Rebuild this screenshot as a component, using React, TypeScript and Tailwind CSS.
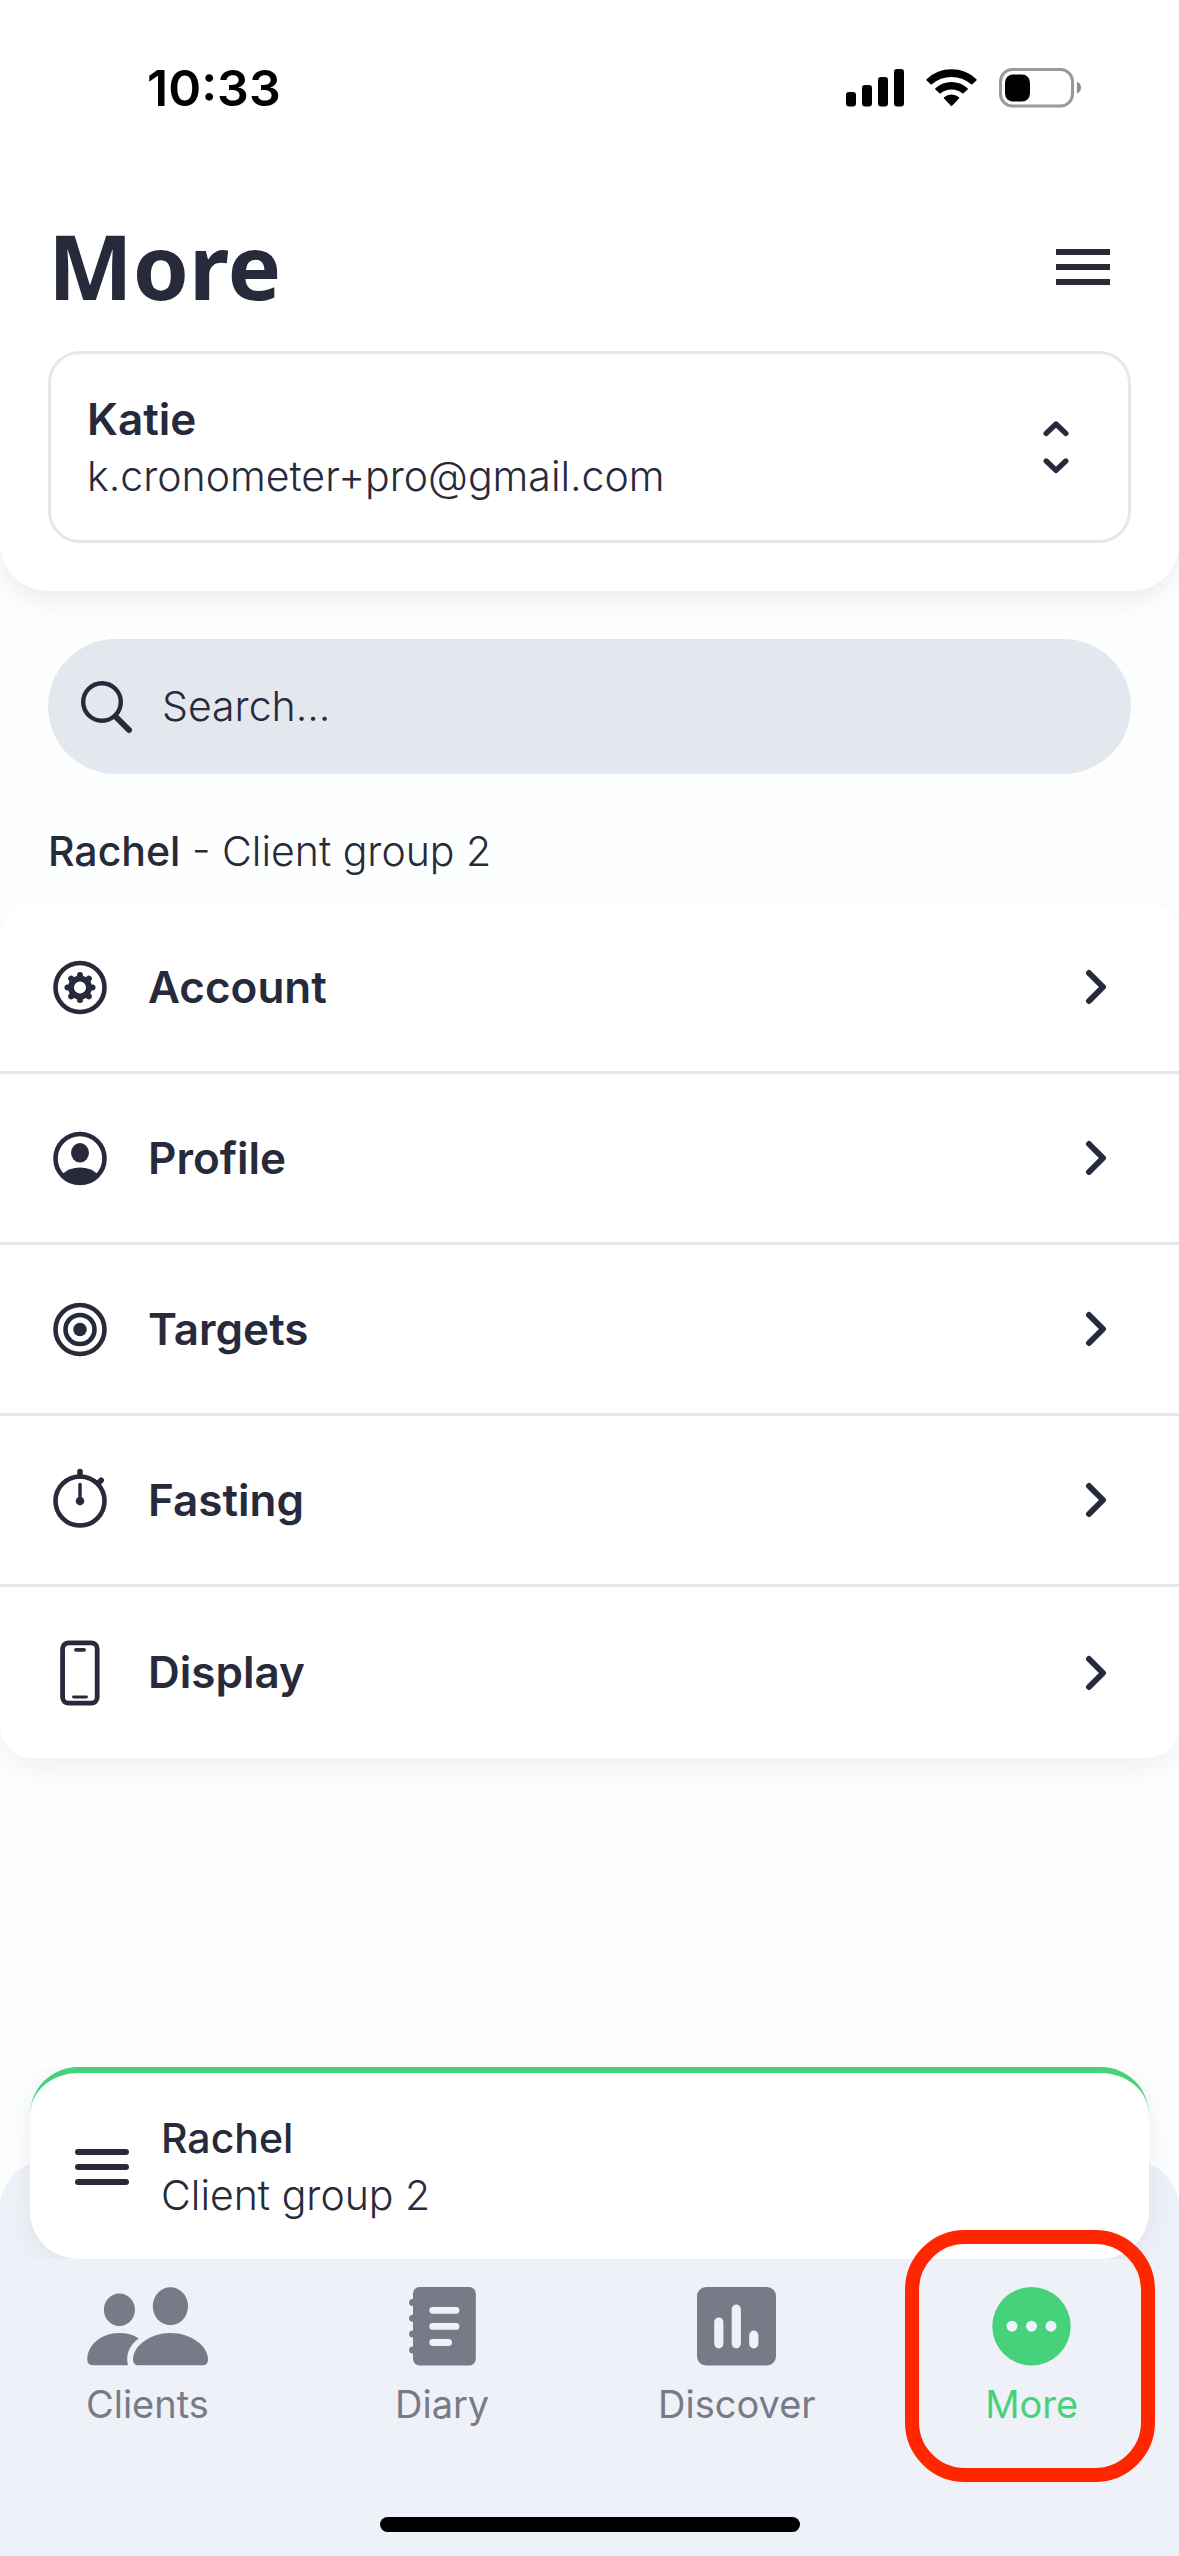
import type { ReactNode } from "react";

const menuItems = [
    { label: "Account", icon: AccountIcon },
    { label: "Profile", icon: ProfileIcon },
    { label: "Targets", icon: TargetsIcon },
    { label: "Fasting", icon: FastingIcon },
    { label: "Display", icon: DisplayIcon },
];

const tabs = [
    { label: "Clients", icon: ClientsIcon, active: false },
    { label: "Diary", icon: DiaryIcon, active: false },
    { label: "Discover", icon: DiscoverIcon, active: false },
    { label: "More", icon: MoreIcon, active: true },
];

function RowIcon({ children }: { children: ReactNode }) {
    return (
        <svg viewBox="0 -2 64 68" className="w-16 h-[68px] shrink-0" fill="none" stroke="currentColor" strokeLinecap="round" aria-hidden="true">
            {children}
        </svg>
    );
}

function AccountIcon() {
    return (
        <RowIcon>
            <circle cx="32" cy="32.5" r="24.5" strokeWidth="4.6" />
            <circle cx="32" cy="32.5" r="9" strokeWidth="6" />
            {[0, 45, 90, 135, 180, 225, 270, 315].map((angle) => (
                <path key={angle} d="M32 21.5V20" strokeWidth="6" transform={`rotate(${angle} 32 32.5)`} />
            ))}
        </RowIcon>
    );
}

function ProfileIcon() {
    return (
        <RowIcon>
            <circle cx="32" cy="32.5" r="24.5" strokeWidth="4.6" />
            <ellipse cx="32" cy="26.8" rx="9" ry="9.7" fill="currentColor" stroke="none" />
            <path d="M14.5 48Q21 41.5 32 41.5T49.5 48A25 25 0 0 1 14.5 48Z" fill="currentColor" stroke="none" />
        </RowIcon>
    );
}

function TargetsIcon() {
    return (
        <RowIcon>
            <circle cx="32" cy="32.5" r="24.5" strokeWidth="4.6" />
            <circle cx="32" cy="32.5" r="14.5" strokeWidth="4.6" />
            <circle cx="32" cy="32.5" r="6.8" fill="currentColor" stroke="none" />
        </RowIcon>
    );
}

function FastingIcon() {
    return (
        <RowIcon>
            <circle cx="32" cy="33" r="24.5" strokeWidth="4.6" />
            <path d="M32 3.5V8M50.5 15L53.2 12.3" strokeWidth="5.6" />
            <path d="M32 16.5V32" strokeWidth="3.5" />
            <circle cx="32" cy="33" r="4.3" fill="currentColor" stroke="none" />
        </RowIcon>
    );
}

function DisplayIcon() {
    return (
        <RowIcon>
            <rect x="14.6" y="1.8" width="34.6" height="60.4" rx="6" strokeWidth="4.8" />
            <path d="M28 8.8H36" strokeWidth="3.8" />
            <path d="M25.5 56H38.5" strokeWidth="2.8" />
        </RowIcon>
    );
}

function ClientsIcon() {
    return (
        <svg width="121" height="80" viewBox="0 0 121 80" fill="currentColor" aria-hidden="true">
            <ellipse cx="32.4" cy="23.7" rx="15.5" ry="16.3" />
            <ellipse cx="83.4" cy="20.3" rx="17.6" ry="19" />
            <path d="M6 79.3Q.3 79.3 .3 73.5C.3 60 13 47 32.5 47Q43.5 47 51.7 52.4C42 59.5 38.5 69 41 79.3Z" />
            <path d="M51.5 79.3Q46 79.3 46 73.5C46 60 63 47 83.5 47S121 60 121 73.5Q121 79.3 115.5 79.3Z" />
        </svg>
    );
}

function DiaryIcon() {
    return (
        <svg width="67" height="80" viewBox="0 -1 67 80" fill="currentColor" aria-hidden="true">
            <rect x="4" width="62.8" height="78.5" rx="6.5" />
            <circle cx="3.6" cy="15.5" r="3.5" />
            <circle cx="3.6" cy="31.3" r="3.5" />
            <circle cx="3.6" cy="47" r="3.5" />
            <circle cx="3.6" cy="63" r="3.5" />
            <path d="M23.7 23.3H47M23.7 39.4H47M23.7 55.5H39.6" fill="none" stroke="#eff1f9" strokeWidth="6.8" strokeLinecap="round" />
        </svg>
    );
}

function DiscoverIcon() {
    return (
        <svg width="79" height="80" viewBox="0 -1 79 80" fill="currentColor" aria-hidden="true">
            <rect width="79" height="78.5" rx="9" />
            <path d="M21.8 35V56.8M39.3 22.2V56.8M56.8 48.2V56.8" fill="none" stroke="#eff1f9" strokeWidth="9.2" strokeLinecap="round" />
        </svg>
    );
}

function MoreIcon() {
    return (
        <svg width="79" height="80" viewBox="0 -1 79 80" fill="currentColor" aria-hidden="true">
            <circle cx="39.5" cy="39.2" r="39.2" />
            <circle cx="20" cy="39.2" r="5.5" fill="#eff1f9" />
            <circle cx="39.5" cy="39.2" r="5.5" fill="#eff1f9" />
            <circle cx="59" cy="39.2" r="5.5" fill="#eff1f9" />
        </svg>
    );
}

function StatusBar() {
    return (
        <div className="flex items-center justify-between h-44 pl-[147px] pr-[98px] text-black">
            <span className="text-[50px] leading-[60px] font-semibold">10:33</span>
            <div className="flex items-center gap-[22px]">
                <svg width="58" height="38" viewBox="0 0 58 38" fill="currentColor" aria-label="Signal">
                    <rect y="23" width="10" height="14.5" rx="3" />
                    <rect x="16" y="16" width="10" height="21.5" rx="3" />
                    <rect x="32" y="8" width="10" height="29.5" rx="3" />
                    <rect x="48" y="0" width="10" height="37.5" rx="3" />
                </svg>
                <svg width="51" height="38" viewBox="0 0 51 38" fill="currentColor" aria-label="Wi-Fi">
                    <path d="M.6 10.2Q11 .3 25.5 .3T50.4 10.2Q51 10.8 50.4 11.4L46.4 15.3Q45.8 15.9 45.2 15.3Q36.5 8 25.5 8T5.8 15.3Q5.2 15.9 4.6 15.3L.6 11.4Q0 10.8 .6 10.2Z" />
                    <path d="M9.4 19.2Q16.5 13 25.5 13T41.6 19.2Q42.2 19.8 41.6 20.4L37.5 24.3Q36.9 24.9 36.3 24.3Q31.5 20.6 25.5 20.6T14.7 24.3Q14.1 24.9 13.5 24.3L9.4 20.4Q8.8 19.8 9.4 19.2Z" />
                    <path d="M18 28.2Q21.2 25.5 25.5 25.5T33 28.2Q33.6 28.8 33 29.4L26.1 36.8Q25.5 37.4 24.9 36.8L18 29.4Q17.4 28.8 18 28.2Z" />
                </svg>
                <svg width="82" height="40" viewBox="0 0 82 40" aria-label="Battery">
                    <rect x="1.5" y="1.5" width="72" height="36.5" rx="12" fill="none" stroke="#999" strokeWidth="3" />
                    <rect x="6" y="6.5" width="25" height="27" rx="8" fill="#000" />
                    <path d="M78 13.5Q82 15.5 82 19.5T78 25.5Z" fill="#8c8c8c" />
                </svg>
            </div>
        </div>
    );
}

function Header() {
    return (
        <header className="bg-white rounded-b-[48px] pb-12 shadow-[0_10px_24px_rgba(0,0,0,0.07)]">
            <StatusBar />
            <div className="flex items-center justify-between mt-[41px] mb-[34px] pl-12 pr-[69px]">
                <h1 className="pb-1 font-['Noto_Sans','Open_Sans',sans-serif] text-[90px] leading-24 font-bold">More</h1>
                <button type="button" aria-label="Menu">
                    <svg width="54" height="36" viewBox="0 0 54 36" stroke="currentColor" strokeWidth="6">
                        <path d="M0 3H54M0 18H54M0 33H54" />
                    </svg>
                </button>
            </div>
            <div className="px-12">
                <button type="button" className="flex items-center justify-between w-full pt-[37px] pb-[35px] pl-9 pr-[58px] text-left border-3 border-[#e5e7ef] rounded-[32px]">
                    <span className="leading-[57px]">
                        <span className="block text-[44px] leading-[57px] font-semibold">Katie</span>
                        <span className="block text-[41px] leading-[57px] font-light">k.cronometer+pro@gmail.com</span>
                    </span>
                    <svg width="28" height="54" viewBox="0 0 28 54" fill="none" stroke="currentColor" strokeWidth="5.4" strokeLinecap="round" strokeLinejoin="round" aria-hidden="true">
                        <path d="M4.2 12.4L14 3L23.8 12.4M4.2 40L14 49.4L23.8 40" />
                    </svg>
                </button>
            </div>
        </header>
    );
}

function ClientCard() {
    return (
        <button
            type="button"
            className="relative z-10 flex items-center gap-8 mx-[30px] pt-[37px] pb-[35px] pl-[45px] pr-12 text-left bg-white border-t-6 border-[#46d27b] rounded-[48px] shadow-[0_4px_30px_rgba(0,0,0,0.07)] [clip-path:inset(0_-30px)]"
        >
            <svg width="54" height="36" viewBox="0 0 54 36" stroke="currentColor" strokeWidth="6" strokeLinecap="round" aria-hidden="true">
                <path d="M3 3H51M3 18H51M3 33H51" />
            </svg>
            <span className="text-[41px] leading-[57px]">
                <span className="block font-medium">Rachel</span>
                <span className="block font-light">Client group 2</span>
            </span>
        </button>
    );
}

function TabBar() {
    return (
        <nav className="-mt-[99px] pt-[126px] pb-6 bg-[#eff1f9] rounded-t-[48px]">
            <div className="grid grid-cols-4">
                {tabs.map((tab) => (
                    <a
                        key={tab.label}
                        href="#"
                        className={`relative z-20 flex flex-col items-center gap-[14px] text-[38px] leading-12 ${tab.active ? "text-[#46d27b]" : "text-[#787a87]"}`}
                    >
                        <tab.icon />
                        {tab.label}
                        {/* Highlight ring round the current tab */}
                        {tab.active && <span className="absolute left-[21px] right-6 -top-14 h-[252px] border-14 border-[#ff2700] rounded-[60px]" />}
                    </a>
                ))}
            </div>
            <div className="w-[420px] h-[15px] mx-auto mt-[89px] bg-black rounded-full" />
        </nav>
    );
}

export default function App() {
    return (
        <div className="flex flex-col min-h-screen overflow-hidden bg-[#fdfffe] text-[#272a3b] font-['Inter','Liberation_Sans',sans-serif]">
            <Header />

            <main>
                <div className="px-12 pt-12">
                    <label className="flex items-center gap-7 h-[135px] px-8 bg-[#e5e7ef] rounded-full">
                        <svg width="54" height="54" viewBox="0 0 54 54" fill="none" stroke="currentColor" strokeLinecap="round" aria-hidden="true">
                            <circle cx="22" cy="22" r="18.8" strokeWidth="4.4" />
                            <path d="M35.5 36.5L49 50" strokeWidth="6" />
                        </svg>
                        <input
                            type="search"
                            aria-label="Search"
                            placeholder="Search..."
                            className="flex-1 min-w-0 bg-transparent text-[41px] leading-[57px] font-light outline-none placeholder:text-[#272a3b]"
                        />
                    </label>
                    <p className="pt-[49px] pb-[23px] text-[41px] leading-[57px] font-light">
                        <span className="font-medium">Rachel</span> - Client group 2
                    </p>
                </div>

                <ul className="bg-white rounded-[32px] shadow-[0_10px_30px_rgba(0,0,0,0.06)] divide-y-3 divide-[#e5e7ef]">
                    {menuItems.map((item) => (
                        <li key={item.label} className="h-[171px]">
                            <a href="#" className="flex items-center gap-9 h-full pl-12 pr-[70px] text-[44px] leading-[57px] font-semibold">
                                <item.icon />
                                <span className="flex-1">{item.label}</span>
                                <svg width="24" height="36" viewBox="0 0 24 36" fill="none" stroke="currentColor" strokeWidth="6" strokeLinecap="round" strokeLinejoin="round" aria-hidden="true">
                                    <path d="M4 4L18 18L4 32" />
                                </svg>
                            </a>
                        </li>
                    ))}
                </ul>
            </main>

            <footer className="flex flex-col mt-auto pt-24">
                <ClientCard />
                <TabBar />
            </footer>
        </div>
    );
}
